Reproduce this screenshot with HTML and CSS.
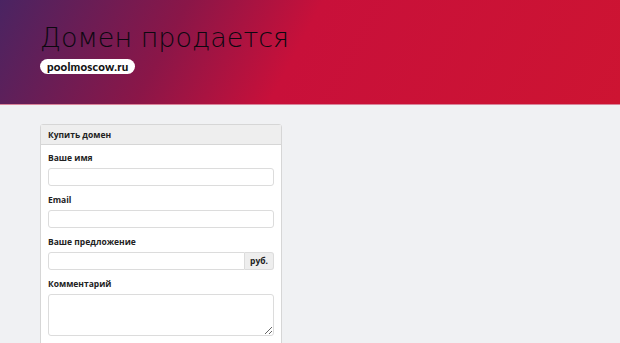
FILE: index.html
```html
<!DOCTYPE html>
<html lang="ru">
<head>
    <meta charset="UTF-8">
    <meta name="viewport" content="width=device-width, initial-scale=1.0">
    <title>Домен продается</title>
    <link rel="stylesheet" href="styles.css">
</head>
<body>
    <header class="hero">
        <h1>Домен продается</h1>
        <span class="domain">poolmoscow.ru</span>
    </header>

    <main class="content">
        <form class="panel">
            <div class="panel-heading">Купить домен</div>
            <div class="panel-body">
                <div class="form-group">
                    <label for="name">Ваше имя</label>
                    <input type="text" id="name">
                </div>
                <div class="form-group">
                    <label for="email">Email</label>
                    <input type="email" id="email">
                </div>
                <div class="form-group">
                    <label for="offer">Ваше предложение</label>
                    <div class="input-group">
                        <input type="text" id="offer">
                        <span class="addon">руб.</span>
                    </div>
                </div>
                <div class="form-group">
                    <label for="comment">Комментарий</label>
                    <textarea id="comment"></textarea>
                </div>
                <button type="submit" aria-label="Отправить"></button>
            </div>
        </form>
    </main>
</body>
</html>
```

FILE: styles.css
```css
* {
    margin: 0;
    padding: 0;
    box-sizing: border-box;
}

body {
    background: #f0f1f3;
    font-family: 'Open Sans', 'Liberation Sans', sans-serif;
    overflow: hidden;
}

.hero {
    height: 105px;
    padding: 20px 40px 0;
    display: flex;
    flex-direction: column;
    align-items: flex-start;
    background: linear-gradient(118deg, #4a2462 0%, #8a1648 28%, #c8103a 48%, #cd1432 100%);
    border-bottom: 1px solid #d9849a;
}

.hero h1 {
    font-family: 'DejaVu Sans', sans-serif;
    font-weight: 200;
    font-size: 27px;
    line-height: 36px;
    color: #0c0810;
}

.domain {
    margin-top: 3px;
    background: white;
    color: #111;
    font-family: 'Lato', 'Open Sans', sans-serif;
    font-weight: 900;
    font-size: 11.5px;
    line-height: 15px;
    padding: 0 7px;
    border-radius: 8px;
    letter-spacing: 0.2px;
}

.content {
    padding: 19px 40px;
}

.panel {
    width: 242px;
    background: white;
    border: 1px solid #d6d6d6;
    border-radius: 3px;
}

.panel-heading {
    background: #eeeeee;
    border-bottom: 1px solid #d6d6d6;
    padding: 0 7px;
    height: 20px;
    line-height: 19px;
    font-size: 8.5px;
    font-weight: 700;
    color: #222;
}

.panel-body {
    padding: 6px 7px;
}

.form-group {
    margin-bottom: 7px;
}

label {
    display: block;
    font-size: 8.5px;
    font-weight: 700;
    line-height: 14px;
    margin-bottom: 3px;
    color: #222;
}

input, textarea {
    display: block;
    width: 100%;
    height: 18px;
    border: 1px solid #dcdcdc;
    border-radius: 3px;
    background: white;
    font-size: 9px;
}

textarea {
    height: 42px;
    resize: vertical;
}

.input-group {
    display: flex;
}

.input-group input {
    border-radius: 3px 0 0 3px;
}

.addon {
    flex: none;
    width: 29px;
    height: 18px;
    line-height: 16px;
    text-align: center;
    background: #eeeeee;
    border: 1px solid #dcdcdc;
    border-left: none;
    border-radius: 0 3px 3px 0;
    font-size: 8.5px;
    font-weight: 700;
    color: #222;
}

button[type="submit"] {
    display: block;
    width: 147px;
    height: 26px;
    background: #e4e4e4;
    border: 1px solid #d0d0d0;
    border-radius: 3px;
}
```
